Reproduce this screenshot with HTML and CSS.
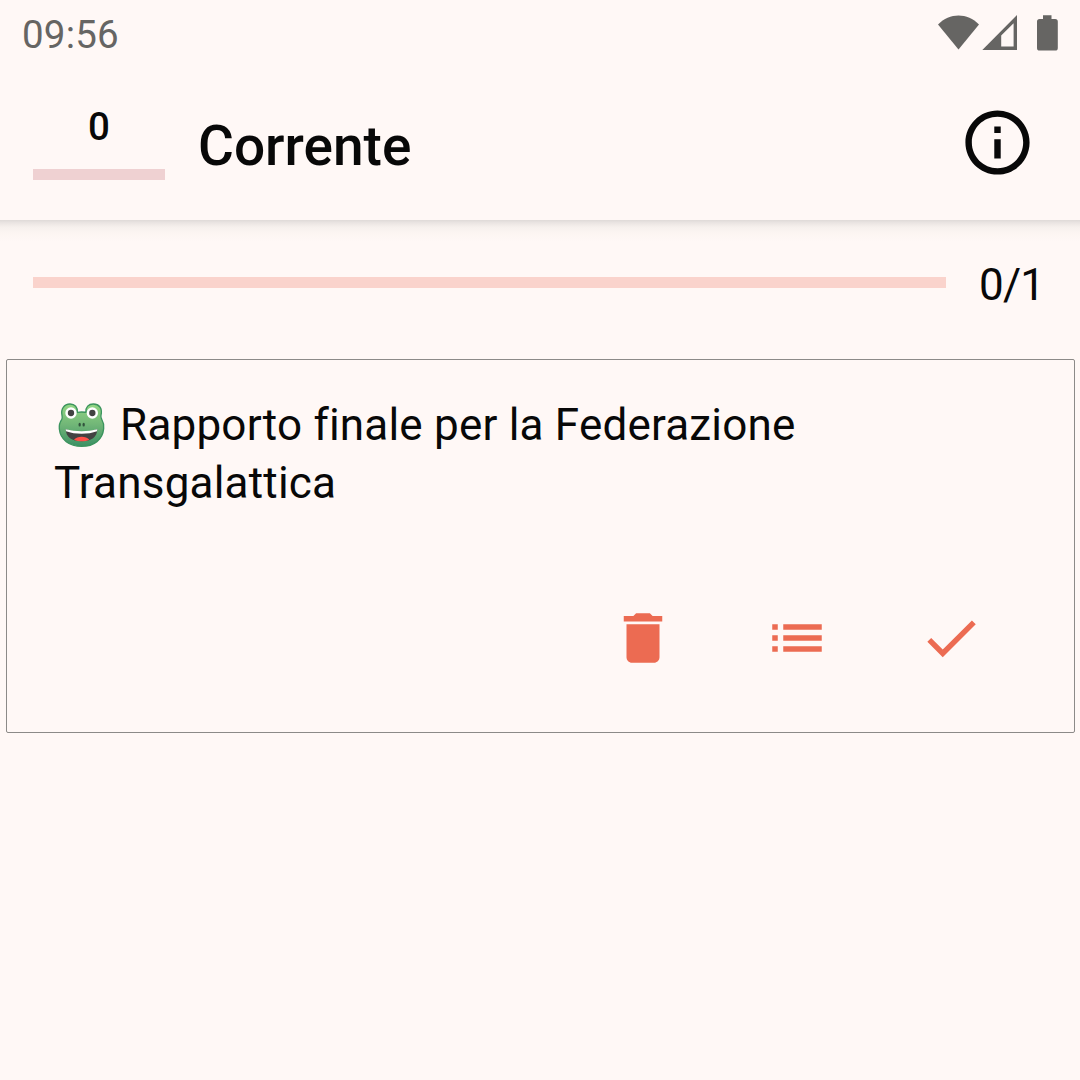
FILE: index.html
```html
<!DOCTYPE html>
<html lang="it">
<head>
<meta charset="utf-8">
<title>Corrente</title>
<link rel="stylesheet" href="styles.css">
</head>
<body>
<div class="status-bar">
  <span class="clock">09:56</span>
  <svg class="status-icons" viewBox="0 0 122 37" aria-hidden="true">
    <path d="M0 10.6C11.5-1.4 29.500-1.400 41 10.600L20.500 35.500Z"/>
    <path fill-rule="evenodd" d="M44.300 36L79 1V36ZM63.200 21.400V32.500H75.600V9.300Z"/>
    <path d="M105 1.200h8.500V5h3.700a2.600 2.600 0 0 1 2.600 2.600V33.900a2.600 2.600 0 0 1-2.600 2.600H101.600A2.600 2.600 0 0 1 99 33.900V7.600A2.600 2.600 0 0 1 101.600 5H105Z"/>
  </svg>
</div>
<header class="app-bar">
  <div class="score"><span class="score-value">0</span><div class="score-track"></div></div>
  <h1 class="title">Corrente</h1>
  <svg class="info-icon" viewBox="0 0 24 24" aria-label="Info"><path d="M11 7h2v2h-2zm0 4h2v6h-2zm1-9C6.480 2 2 6.480 2 12s4.480 10 10 10 10-4.480 10-10S17.520 2 12 2zm0 18c-4.410 0-8-3.590-8-8s3.590-8 8-8 8 3.590 8 8-3.590 8-8 8z"/></svg>
</header>
<main class="content">
  <div class="progress"><div class="progress-track"></div><span class="progress-label">0/1</span></div>
  <article class="card">
    <p class="task"><svg class="frog" viewBox="30 15 156 150" aria-label="Rana">
      <defs><linearGradient id="skin" x1="0" y1="0" x2="0" y2="1"><stop offset="0" stop-color="#94d784"/><stop offset=".5" stop-color="#70b577"/><stop offset="1" stop-color="#3b9064"/></linearGradient></defs>
      <path d="M110 51C117 51 121 52 123 52C121 36 131 27 145 27C162 27 173 40 168 60C166 67 168 70 171 75C176 83 177 92 176 101C173 134 147 154 110 154C73 154 46 134 43 102C42 91 44 82 50 74C53 69 52 66 51 61C47 42 57 27 75 27C90 27 98 37 97 52C100 51 105 51 110 51Z" fill="url(#skin)" stroke="#3c945e" stroke-width="4"/>
      <circle cx="78" cy="54" r="17" fill="#fff"/><circle cx="142" cy="54" r="17" fill="#fff"/>
      <circle cx="78" cy="54" r="9.500" fill="#424242"/><circle cx="142" cy="54" r="9.500" fill="#424242"/>
      <ellipse cx="104" cy="89" rx="3.500" ry="5.500" fill="#32543d"/><ellipse cx="116" cy="89" rx="3.500" ry="5.500" fill="#32543d"/>
      <path d="M62 103C91 113 129 113 157 103C156 127 140 139 110 139C80 139 63 127 62 103Z" fill="#424242"/>
      <path d="M62 103C91 111 129 111 157 103L156 109C129 119 91 119 63 109Z" fill="#fff"/>
      <path d="M87 134C96 122 124 122 133 134C119 140 101 140 87 134Z" fill="#ff5048"/>
    </svg> Rapporto finale per la Federazione Transgalattica</p>
    <div class="actions">
      <svg class="action" viewBox="0 0 24 24" aria-label="Elimina"><path d="M6 19c0 1.100.9 2 2 2h8c1.100 0 2-.9 2-2V7H6v12zM19 4h-3.500l-1-1h-5l-1 1H5v2h14V4z"/></svg>
      <svg class="action" viewBox="0 0 24 24" aria-label="Elenco"><path d="M3 13h2v-2H3v2zm0 4h2v-2H3v2zm0-8h2V7H3v2zm4 4h14v-2H7v2zm0 4h14v-2H7v2zM7 7v2h14V7H7z"/></svg>
      <svg class="action" viewBox="0 0 24 24" aria-label="Fatto"><path d="M9 16.200L4.800 12l-1.400 1.400L9 19 21 7l-1.400-1.400L9 16.200z"/></svg>
    </div>
  </article>
</main>
</body>
</html>
```
FILE: styles.css
```css
* { box-sizing: border-box; }
body {
  margin: 0;
  height: 1080px;
  overflow: hidden;
  background: #fff8f6;
  color: #080808;
  font-family: Roboto, sans-serif;
}
svg { display: block; flex: none; }
.status-bar {
  display: flex;
  justify-content: space-between;
  height: 66px;
  padding: 14px 20px 0 22px;
  color: #666563;
}
.clock { font-size: 38.5px; line-height: 42px; letter-spacing: .2px; }
.status-icons { width: 122px; height: 37px; fill: currentColor; }
.app-bar {
  display: flex;
  align-items: flex-start;
  height: 154px;
  padding: 38px 44px 0 33px;
}
.score { width: 132px; text-align: center; }
.score-value {
  display: block;
  height: 65px;
  font-size: 38.5px;
  font-weight: 500;
  line-height: 46px;
}
.score-track { height: 11px; background: #efd1d2; }
.title {
  flex: 1;
  margin: 9px 0 0 33px;
  font-size: 55px;
  font-weight: 500;
  line-height: 66px;
}
.info-icon { width: 77px; height: 77px; fill: currentColor; }
/* the app bar's shadow falls on the top of the content */
.content {
  display: flow-root;
  background: linear-gradient(#dfdad8, #ebe5e3 3px, #f6f0ed 7px, #fcf5f2 13px, #fff8f6 22px);
}
.progress {
  display: flex;
  align-items: center;
  gap: 33px;
  height: 125px;
  padding: 0 34px 0 33px;
}
.progress-track { flex: 1; height: 11px; background: #fad3cc; }
.progress-label {
  width: 67px;
  padding-top: 5px;
  font-size: 44px;
  line-height: 52px;
  letter-spacing: -.8px;
}
.card {
  height: 374px;
  margin: 14px 5px 0 6px;
  padding: 36px 90px 0 47px;
  border: 1px solid #8c8a88;
  border-radius: 2px;
}
.task {
  margin: 0;
  height: 209px;
  font-size: 44px;
  line-height: 58px;
  letter-spacing: .2px;
}
.frog {
  display: inline-block;
  width: 52px;
  height: 50px;
  margin: 0 2px 0 1px;
  vertical-align: -10px;
}
.actions { display: flex; justify-content: flex-end; gap: 88px; }
.action { width: 66px; height: 66px; fill: #ec6b52; }
```
